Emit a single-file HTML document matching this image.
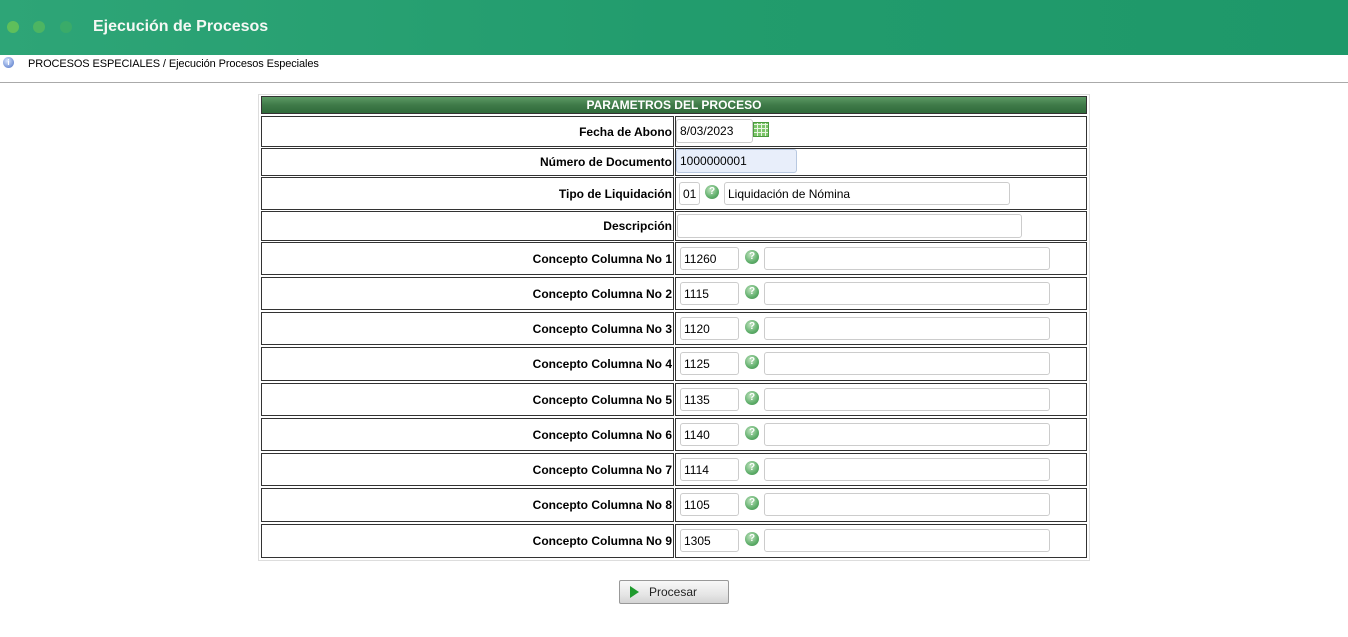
<!DOCTYPE html>
<html><head><meta charset="utf-8"><style>
*{margin:0;padding:0;box-sizing:border-box}
body{width:1348px;height:637px;background:#fff;font-family:"Liberation Sans",Tahoma,sans-serif;font-size:12px;color:#000;position:relative;overflow:hidden}
.a{position:absolute}
.top{left:0;top:0;width:1348px;height:55px;background:linear-gradient(90deg,#2ea577 0%,#229c6d 50%,#1e9869 100%)}
.dot{width:12px;height:12px;border-radius:50%;top:21px}
.title{left:93px;top:18px;color:#f4f8f4;font-weight:bold;font-size:16px}
.cell{border:1px solid #333;}
.lbl{font-weight:bold;text-align:right;padding-right:1px;display:flex;align-items:center;justify-content:flex-end}
.in{border:1px solid #ccc;border-radius:3px;background:#fff;font-size:12px;padding-left:3px;display:flex;align-items:center}
.help{width:14px;height:14px;border-radius:50%;background:radial-gradient(circle at 40% 35%,#bfe3bf,#5fae6a 60%,#3d8c4c);color:#fff;font-size:10px;font-weight:bold;text-align:center;line-height:14px}
</style></head><body>
<div class="a top"></div>
<div class="a dot" style="left:7px;background:#5fbf5b"></div>
<div class="a dot" style="left:33px;background:#4db562"></div>
<div class="a dot" style="left:60px;background:#3aab69"></div>
<div class="a title">Ejecución de Procesos</div>
<div class="a" style="left:3px;top:57px;width:11px;height:11px;border-radius:50%;background:radial-gradient(circle at 40% 35%,#d8e6ff,#4a6fc4);color:#fff;font-size:8px;text-align:center;line-height:11px;font-weight:bold">i</div>
<div class="a" style="left:28px;top:58px;font-size:11px;letter-spacing:-0.1px">PROCESOS ESPECIALES / Ejecución Procesos Especiales</div>
<div class="a" style="left:0;top:82px;width:1348px;height:1px;background:#aaa"></div>

<div class="a" style="left:258px;top:94px;width:832px;height:467px;border:1px solid #ddd"></div>
<div class="a" style="left:261px;top:96px;width:826px;height:18px;background:linear-gradient(#5c9a64,#3f7a48 50%,#2f6a3a);border:1px solid #333;color:#fff;font-weight:bold;text-align:center;line-height:16px">PARAMETROS DEL PROCESO</div>

<div id="rows"></div>
<script>
var rows=[
[116,31,"Fecha de Abono"],[148,28,"Número de Documento"],[177,33,"Tipo de Liquidación"],[211,30,"Descripción"]];
var codes=["11260","1115","1120","1125","1135","1140","1114","1105","1305"];
var ys=[242,277,312,347,383,418,453,488,524];
var h='';
function cells(y,hh,l){h+='<div class="a cell lbl" style="left:261px;top:'+y+'px;width:413px;height:'+hh+'px">'+l+'</div><div class="a cell" style="left:675px;top:'+y+'px;width:412px;height:'+hh+'px"></div>';}
rows.forEach(function(r){cells(r[0],r[1],r[2]);});
h+='<div class="a in" style="left:676px;top:119px;width:77px;height:24px">8/03/2023</div>';
h+='<div class="a" style="left:753px;top:122px;width:16px;height:15px;background:#7cc56a;border:1px solid #4a9a3c;background-image:repeating-linear-gradient(90deg,transparent 0 3px,#e8f5e0 3px 4px),repeating-linear-gradient(0deg,transparent 0 3px,#e8f5e0 3px 4px)"></div>';
h+='<div class="a in" style="left:676px;top:149px;width:121px;height:24px;background:#e8eefa;border-color:#b8c8e0">1000000001</div>';
h+='<div class="a in" style="left:679px;top:182px;width:21px;height:23px">01</div>';
h+='<div class="a help" style="left:705px;top:185px">?</div>';
h+='<div class="a in" style="left:724px;top:182px;width:286px;height:23px">Liquidación de Nómina</div>';
h+='<div class="a in" style="left:677px;top:214px;width:345px;height:24px"></div>';
ys.forEach(function(y,i){var hh=(i<8?ys[i+1]:560)-y-2;cells(y,hh,"Concepto Columna No "+(i+1));
h+='<div class="a in" style="left:680px;top:'+(y+5)+'px;width:59px;height:23px">'+codes[i]+'</div>';
h+='<div class="a help" style="left:745px;top:'+(y+8)+'px">?</div>';
h+='<div class="a in" style="left:764px;top:'+(y+5)+'px;width:286px;height:23px"></div>';});
document.getElementById('rows').innerHTML=h;
</script>
<div class="a" style="left:619px;top:580px;width:110px;height:24px;border:1px solid #999;border-radius:2px;background:linear-gradient(#f8f8f8,#e6e6e6 60%,#d4d4d4)"></div>
<div class="a" style="left:630px;top:586px;width:0;height:0;border-left:9px solid #1f9a2e;border-top:6px solid transparent;border-bottom:6px solid transparent"></div>
<div class="a" style="left:649px;top:585px;font-size:12px;color:#222">Procesar</div>
</body></html>
